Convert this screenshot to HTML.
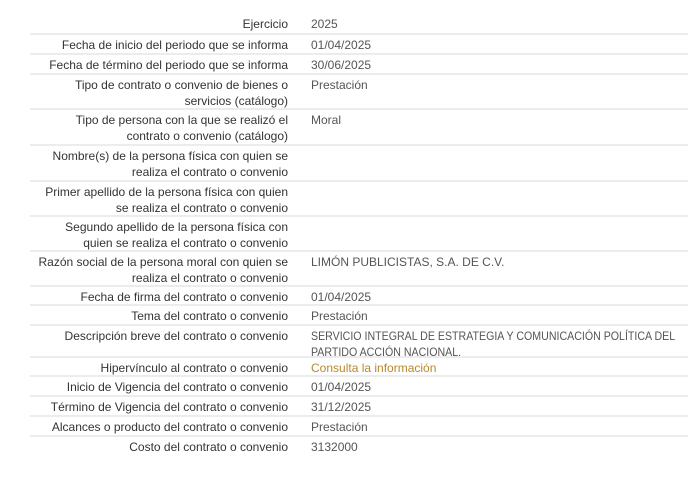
<!DOCTYPE html>
<html><head><meta charset="utf-8"><style>
body{margin:0;background:#fff;width:700px;height:477px;position:relative;overflow:hidden;font-family:"Liberation Sans",sans-serif;font-size:12px;line-height:16px}
.r{position:absolute;left:30px;width:658px;border-bottom:2px solid #ececec;box-sizing:border-box}
.l{position:absolute;right:400px;text-align:right;color:#333;top:2px;white-space:nowrap}
.v{position:absolute;left:281px;color:#555;top:2px;white-space:nowrap}
a{color:#b8892a;text-decoration:none}
</style></head><body>
<div class="r" style="top:14px;height:21px"><div class="l">Ejercicio</div><div class="v">2025</div></div>
<div class="r" style="top:35px;height:20px"><div class="l">Fecha de inicio del periodo que se informa</div><div class="v">01/04/2025</div></div>
<div class="r" style="top:55px;height:20px"><div class="l">Fecha de término del periodo que se informa</div><div class="v">30/06/2025</div></div>
<div class="r" style="top:75px;height:35px"><div class="l">Tipo de contrato o convenio de bienes o<br>servicios (catálogo)</div><div class="v">Prestación</div></div>
<div class="r" style="top:110px;height:36px"><div class="l">Tipo de persona con la que se realizó el<br>contrato o convenio (catálogo)</div><div class="v">Moral</div></div>
<div class="r" style="top:146px;height:36px"><div class="l">Nombre(s) de la persona física con quien se<br>realiza el contrato o convenio</div><div class="v"></div></div>
<div class="r" style="top:182px;height:35px"><div class="l">Primer apellido de la persona física con quien<br>se realiza el contrato o convenio</div><div class="v"></div></div>
<div class="r" style="top:217px;height:35px"><div class="l">Segundo apellido de la persona física con<br>quien se realiza el contrato o convenio</div><div class="v"></div></div>
<div class="r" style="top:252px;height:35px"><div class="l">Razón social de la persona moral con quien se<br>realiza el contrato o convenio</div><div class="v">LIMÓN PUBLICISTAS, S.A. DE C.V.</div></div>
<div class="r" style="top:287px;height:19px"><div class="l">Fecha de firma del contrato o convenio</div><div class="v">01/04/2025</div></div>
<div class="r" style="top:306px;height:20px"><div class="l">Tema del contrato o convenio</div><div class="v">Prestación</div></div>
<div class="r" style="top:326px;height:32px"><div class="l">Descripción breve del contrato o convenio</div><div class="v" style="transform:scaleX(0.885);transform-origin:0 0">SERVICIO INTEGRAL DE ESTRATEGIA Y COMUNICACIÓN POLÍTICA DEL<br>PARTIDO ACCIÓN NACIONAL.</div></div>
<div class="r" style="top:358px;height:19px"><div class="l">Hipervínculo al contrato o convenio</div><div class="v"><a>Consulta la información</a></div></div>
<div class="r" style="top:377px;height:20px"><div class="l">Inicio de Vigencia del contrato o convenio</div><div class="v">01/04/2025</div></div>
<div class="r" style="top:397px;height:20px"><div class="l">Término de Vigencia del contrato o convenio</div><div class="v">31/12/2025</div></div>
<div class="r" style="top:417px;height:20px"><div class="l">Alcances o producto del contrato o convenio</div><div class="v">Prestación</div></div>
<div class="r" style="top:437px;height:20px;border-bottom:none"><div class="l">Costo del contrato o convenio</div><div class="v">3132000</div></div>
</body></html>
